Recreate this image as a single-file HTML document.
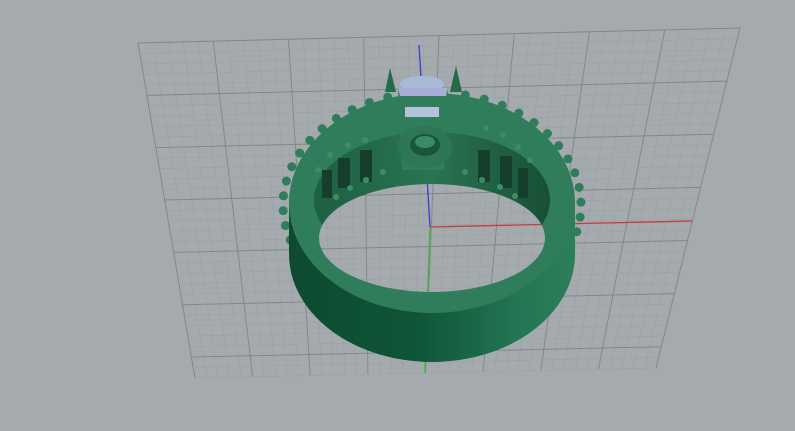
<!DOCTYPE html>
<html><head><meta charset="utf-8"><style>
html,body{margin:0;padding:0;background:#a5aaaf;width:795px;height:431px;overflow:hidden}
svg{display:block}
</style></head><body>
<svg id="s" width="795" height="431" viewBox="0 0 795 431" xmlns="http://www.w3.org/2000/svg">
<defs>
<linearGradient id="side" x1="0" x2="1" y1="0" y2="0">
<stop offset="0" stop-color="#0e4a30"/><stop offset="0.45" stop-color="#0f5538"/><stop offset="0.8" stop-color="#237553"/><stop offset="1" stop-color="#2c7f5a"/>
</linearGradient>
<linearGradient id="wall" x1="0" x2="1">
<stop offset="0" stop-color="#1d5f42"/><stop offset="0.5" stop-color="#2a7452"/><stop offset="1" stop-color="#184f36"/>
</linearGradient>
<mask id="hole"><rect width="795" height="431" fill="#fff"/><ellipse cx="432" cy="238" rx="113" ry="54" fill="#000"/></mask>
</defs>
<g id="grid" stroke="#8a8e94" fill="none"></g>
<line x1="419" y1="45" x2="430" y2="227" stroke="#3a3ad0" stroke-width="1.3"/>
<line x1="430" y1="227" x2="692" y2="221" stroke="#c83a3a" stroke-width="1.3"/>
<line x1="430" y1="227" x2="425" y2="373" stroke="#3cb43c" stroke-width="1.3"/>
<ellipse cx="422" cy="84" rx="22" ry="8" fill="#a9b9d8"/>
<g id="bumps" fill="#2f7d5a"></g>
<g mask="url(#hole)">
<path d="M289 205 L289 254 A143 108 0 0 0 575 254 L575 205 Z" fill="url(#side)"/>
<ellipse cx="432" cy="203" rx="143" ry="110" fill="#2f7d5a"/>
<ellipse cx="432" cy="200" rx="118" ry="68" fill="url(#wall)"/>
<g fill="#153f2c">
<rect x="338" y="158" width="12" height="30"/><rect x="360" y="150" width="12" height="32"/><rect x="322" y="170" width="10" height="28"/>
<rect x="478" y="150" width="12" height="32"/><rect x="500" y="156" width="12" height="32"/><rect x="518" y="168" width="10" height="30"/>
</g>
<g fill="#3d8c68">
<circle cx="348" cy="145" r="3"/><circle cx="365" cy="140" r="3"/><circle cx="330" cy="155" r="3"/><circle cx="318" cy="170" r="3"/>
<circle cx="486" cy="128" r="3"/><circle cx="503" cy="135" r="3"/><circle cx="518" cy="147" r="3"/><circle cx="530" cy="160" r="3"/>
<circle cx="465" cy="172" r="3"/><circle cx="482" cy="180" r="3"/><circle cx="500" cy="187" r="3"/><circle cx="515" cy="196" r="3"/>
<circle cx="383" cy="172" r="3"/><circle cx="366" cy="180" r="3"/><circle cx="350" cy="188" r="3"/><circle cx="336" cy="197" r="3"/>
</g>
<path d="M398 88 L448 88 L444 170 L402 170 Z" fill="#2f7d5a"/>
<path d="M398 88 L448 88 L446 96 L400 96 Z" fill="#a5afd6"/>
<rect x="405" y="107" width="34" height="10" fill="#b4c2e0"/>
<ellipse cx="425" cy="147" rx="27" ry="21" fill="#2d7756"/>
<ellipse cx="425" cy="145" rx="15" ry="11" fill="#1a563b"/>
<ellipse cx="425" cy="142" rx="10" ry="6" fill="#3a8a66"/>
</g>
<path d="M385 92 L390 68 L396 92 Z" fill="#246b4a"/>
<path d="M450 92 L456 66 L462 92 Z" fill="#246b4a"/>
</svg>
<script>
var g=document.getElementById('grid');
var TL=[138,43],TR=[740,28],BR=[656,368],BL=[195,378];
function P(u,v){var tx=TL[0]+(TR[0]-TL[0])*u,ty=TL[1]+(TR[1]-TL[1])*u,bx=BL[0]+(BR[0]-BL[0])*u,by=BL[1]+(BR[1]-BL[1])*u;return [tx+(bx-tx)*v,ty+(by-ty)*v];}
var h='',NX=40,NY=32;
for(var i=0;i<=NX;i++){var a=P(i/NX,0),b=P(i/NX,1),m=i%5==0;h+='<line x1="'+a[0]+'" y1="'+a[1]+'" x2="'+b[0]+'" y2="'+b[1]+'" stroke="'+(m?'#83878c':'#9da1a6')+'" stroke-width="'+(m?1:0.7)+'"/>';}
for(var j=0;j<=NY;j++){var a=P(0,j/NY),b=P(1,j/NY),m=j%5==0;h+='<line x1="'+a[0]+'" y1="'+a[1]+'" x2="'+b[0]+'" y2="'+b[1]+'" stroke="'+(m?'#83878c':'#9da1a6')+'" stroke-width="'+(m?1:0.7)+'"/>';}
g.innerHTML=h;
var bb='';
for(var k=0;k<30;k++){var t=Math.PI*(0.9+k*0.042);if(Math.abs(t-1.5*Math.PI)<0.2)continue;var x=432+149*Math.cos(t),y=205+113*Math.sin(t);bb+='<circle cx="'+x+'" cy="'+y+'" r="4.5"/>';}
document.getElementById('bumps').innerHTML=bb;
</script>
</body></html>
